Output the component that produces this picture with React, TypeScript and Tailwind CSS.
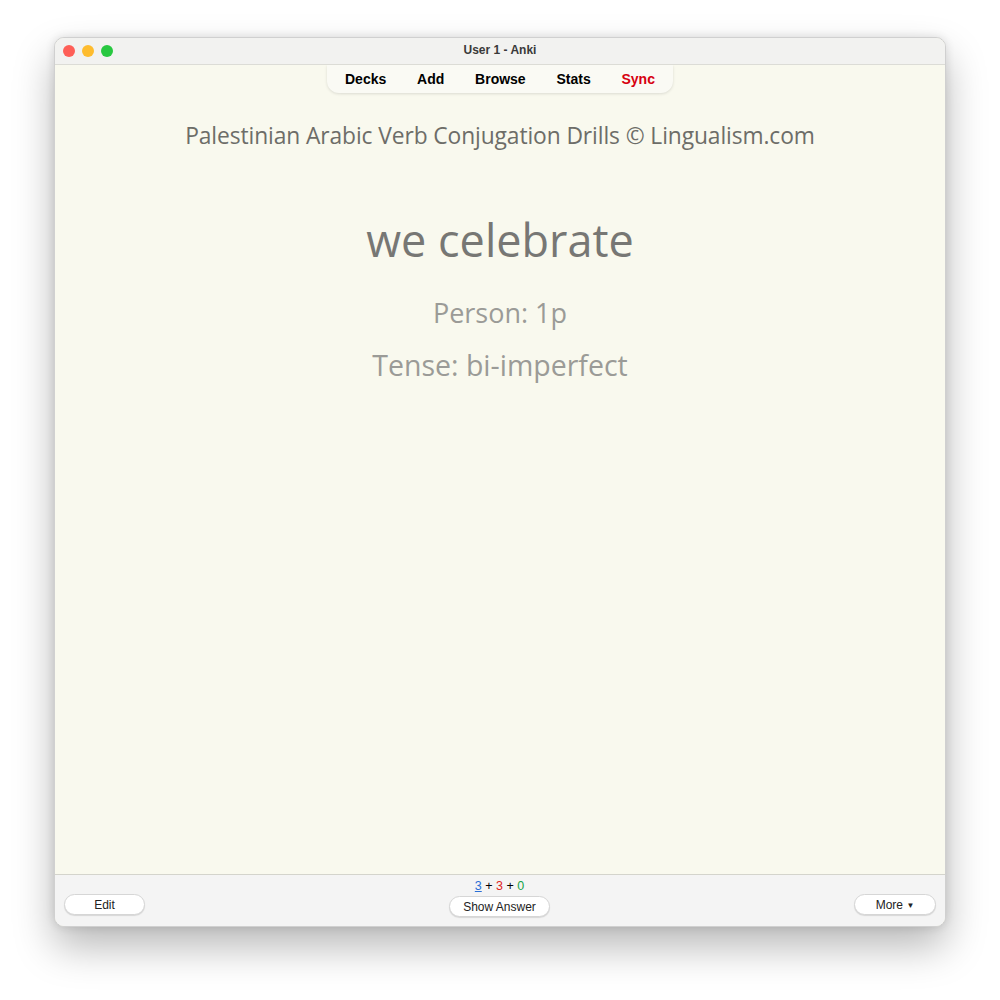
import { useState } from "react";

const tabs = ["Decks", "Add", "Browse", "Stats"];

const Pill = ({ children, className = "" }: { children: React.ReactNode; className?: string }) => (
  <button
    className={
      "h-[21px] rounded-full bg-white border border-[#d6d6d6] shadow-[0_1px_1px_rgba(0,0,0,0.12)] text-[12px] text-[#222] leading-none " +
      className
    }
  >
    {children}
  </button>
);

export default function App() {
  const [answer] = useState(false);

  return (
    <div className="w-[1000px] h-[1000px] bg-white pt-[37px] pl-[54px] font-['Liberation_Sans',Arial,sans-serif]">
      <div className="w-[892px] h-[890px] rounded-[10px] overflow-hidden flex flex-col bg-[#f9f9ee] border border-[#d0d0d0] shadow-[0_20px_40px_rgba(0,0,0,0.28),0_0_10px_rgba(0,0,0,0.12)]">
        {/* title bar */}
        <div className="relative h-[27px] shrink-0 bg-[#f2f2f0] border-b border-[#dcdcd6] flex items-center justify-center">
          <div className="absolute left-[8px] top-[7px] flex gap-[7px]">
            <span className="w-[12px] h-[12px] rounded-full bg-[#fe5f57]" />
            <span className="w-[12px] h-[12px] rounded-full bg-[#febc2e]" />
            <span className="w-[12px] h-[12px] rounded-full bg-[#28c840]" />
          </div>
          <span className="text-[12px] font-bold text-[#3a3a3a] -mt-[3px]">User 1 - Anki</span>
        </div>

        {/* toolbar */}
        <div className="flex justify-center shrink-0">
          <div className="w-[346px] h-[28px] bg-[#fafaf4] rounded-b-[12px] shadow-[0_1px_3px_rgba(0,0,0,0.12)] flex items-center justify-between px-[18px] text-[14px] font-bold text-black">
            {tabs.map((t) => (
              <span key={t}>{t}</span>
            ))}
            <span className="text-[#d7000f]">Sync</span>
          </div>
        </div>

        {/* card */}
        <div className="flex-1 flex flex-col items-center font-['Open_Sans',sans-serif] text-center">
          <div className="mt-[26px] text-[22.8px] text-[#6d6d68] tracking-[-0.1px]">
            Palestinian Arabic Verb Conjugation Drills © Lingualism.com
          </div>
          <div className="mt-[59px] text-[45px] leading-[56px] text-[#777774]">we celebrate</div>
          <div className="mt-[27px] text-[27px] leading-[36px] text-[#9b9b97]">Person: 1p</div>
          <div className="mt-[16px] text-[28.5px] leading-[36px] text-[#9b9b97]">Tense: bi-imperfect</div>
        </div>

        {/* bottom bar */}
        <div className="h-[52px] shrink-0 bg-[#f4f4f4] border-t border-[#d4d4cc] flex items-start justify-between px-[9px]">
          <Pill className="w-[81px] mt-[19px]">Edit</Pill>
          <div className="flex flex-col items-center pt-[4px]">
            <div className="text-[12.5px] leading-[14px]">
              <span className="text-[#2a6fd6] underline">3</span>
              <span className="text-black"> + </span>
              <span className="text-[#e02424]">3</span>
              <span className="text-black"> + </span>
              <span className="text-[#16a34a]">0</span>
            </div>
            <Pill className="w-[101px] mt-[3px]">{answer ? "Again" : "Show Answer"}</Pill>
          </div>
          <Pill className="w-[82px] mt-[19px]">
            More <span className="text-[8px] align-middle">▼</span>
          </Pill>
        </div>
      </div>
    </div>
  );
}
